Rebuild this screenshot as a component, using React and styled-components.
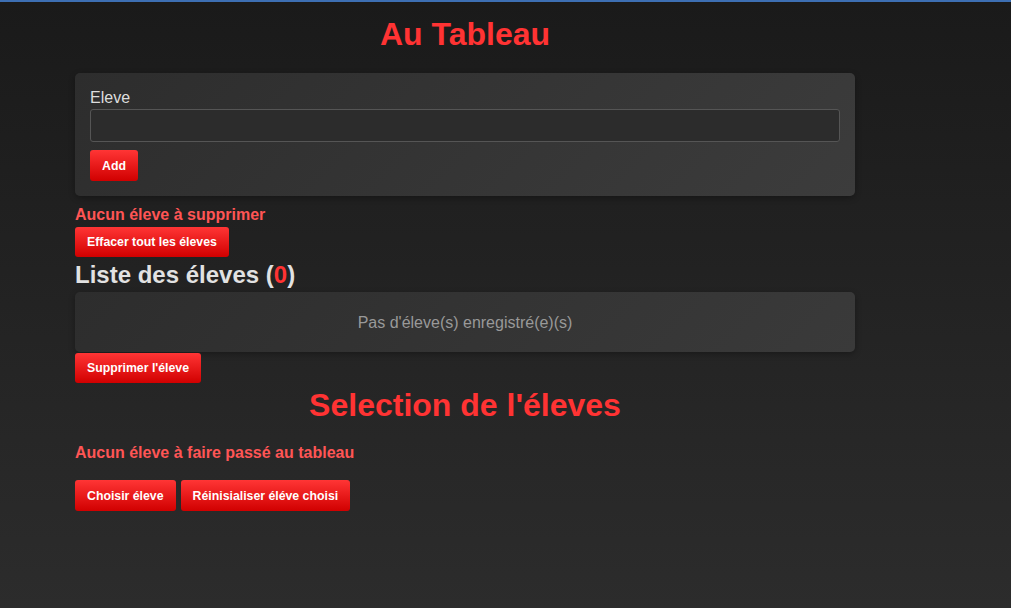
import styled, { createGlobalStyle } from 'styled-components';

const GlobalStyle = createGlobalStyle`
  html, body {
    margin: 0;
    padding: 0;
  }
  body {
    min-height: 100vh;
    font-family: "Liberation Sans", Arial, sans-serif;
    background: linear-gradient(180deg, #1a1a1a 0%, #2c2c2c 100%);
    border-top: 2px solid #3d6fb3;
    box-sizing: border-box;
    color: #e0e0e0;
  }
`;

const Container = styled.div`
  width: 780px;
  margin-left: 75px;
  padding-top: 14px;
`;

const Title = styled.h1`
  margin: ${(p) => p.$top || 0}px 0 ${(p) => p.$gap || 0}px;
  font-size: 32px;
  font-weight: 700;
  text-align: center;
  color: #ff3333;
`;

const Card = styled.div`
  background: linear-gradient(135deg, #2d2d2d 0%, #3c3c3c 100%);
  border-radius: 5px;
  box-shadow: 0 2px 6px rgba(0, 0, 0, 0.3);
  padding: 15px;
`;

const Label = styled.label`
  display: block;
  font-size: 16px;
  color: #dddddd;
  margin: 1px 0 2px;
`;

const Input = styled.input`
  display: block;
  box-sizing: border-box;
  width: 100%;
  height: 33px;
  background: #2c2c2c;
  border: 1px solid #555555;
  border-radius: 3px;
  color: #eeeeee;
  font-size: 14px;
  padding: 0 8px;
  margin-bottom: 8px;
  outline: none;
`;

const Button = styled.button`
  box-sizing: border-box;
  height: ${(p) => p.$tall ? 31 : 30}px;
  padding: 0 12px;
  border: none;
  border-radius: 3px;
  background: linear-gradient(180deg, #ff3535 0%, #d10000 100%);
  color: #ffffff;
  font-family: "Liberation Sans", Arial, sans-serif;
  font-size: 12.3px;
  font-weight: 700;
  cursor: pointer;
`;

const Notice = styled.div`
  font-size: 16px;
  font-weight: 700;
  color: #ff5555;
  margin: ${(p) => p.$top || 0}px 0 ${(p) => p.$bottom || 0}px;
`;

const ListTitle = styled.h2`
  margin: 4px 0 3px;
  font-size: 24px;
  font-weight: 700;
  color: #e2e2e2;
`;

const Count = styled.span`
  color: #ff3333;
`;

const EmptyBox = styled.div`
  background: linear-gradient(135deg, #2d2d2d 0%, #3a3a3a 100%);
  border-radius: 5px;
  box-shadow: 0 2px 6px rgba(0, 0, 0, 0.3);
  padding: 22px 20px 20px;
  text-align: center;
  font-size: 16px;
  color: #999999;
`;

const ButtonRow = styled.div`
  display: flex;
  gap: 5px;
  margin-top: ${(p) => p.$top || 0}px;
`;

export default function App() {
  return (
    <>
      <GlobalStyle />
      <Container>
        <Title $gap={20}>Au Tableau</Title>
        <Card>
          <Label htmlFor="eleve">Eleve</Label>
          <Input id="eleve" type="text" />
          <Button $tall>Add</Button>
        </Card>
        <Notice $top={10} $bottom={3}>Aucun éleve à supprimer</Notice>
        <ButtonRow>
          <Button>Effacer tout les éleves</Button>
        </ButtonRow>
        <ListTitle>
          Liste des éleves (<Count>0</Count>)
        </ListTitle>
        <EmptyBox>Pas d'éleve(s) enregistré(e)(s)</EmptyBox>
        <ButtonRow $top={1}>
          <Button>Supprimer l'éleve</Button>
        </ButtonRow>
        <Title $top={4} $gap={20}>Selection de l'éleves</Title>
        <Notice $bottom={18}>Aucun éleve à faire passé au tableau</Notice>
        <ButtonRow>
          <Button $tall>Choisir éleve</Button>
          <Button $tall>Réinisialiser éléve choisi</Button>
        </ButtonRow>
      </Container>
    </>
  );
}
